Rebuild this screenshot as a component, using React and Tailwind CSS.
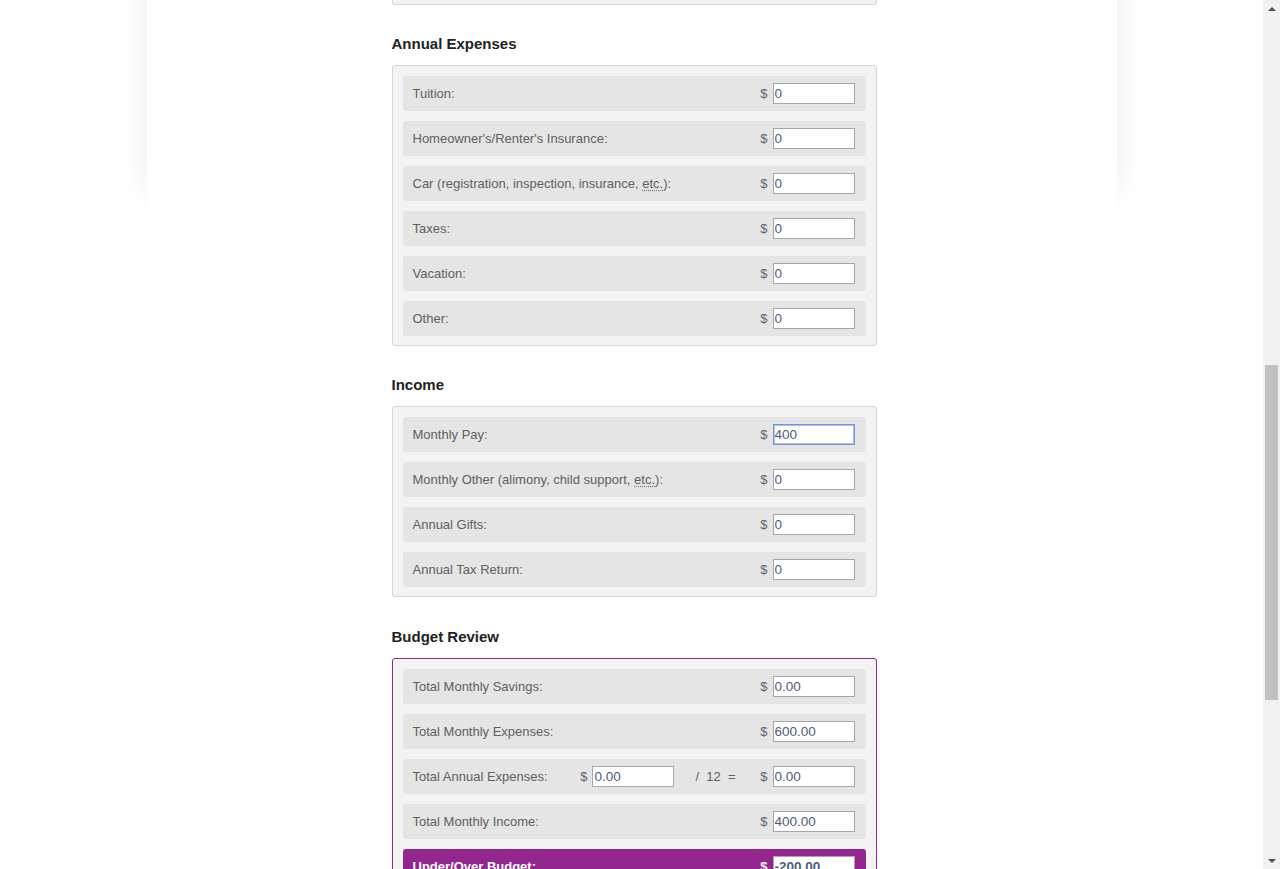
import React from 'react';

const annual = [
    { label: 'Tuition:', value: '0' },
    { label: "Homeowner's/Renter's Insurance:", value: '0' },
    { label: 'Car (registration, inspection, insurance, ', etc: true, value: '0' },
    { label: 'Taxes:', value: '0' },
    { label: 'Vacation:', value: '0' },
    { label: 'Other:', value: '0' },
];

const income = [
    { label: 'Monthly Pay:', value: '400', focused: true },
    { label: 'Monthly Other (alimony, child support, ', etc: true, value: '0' },
    { label: 'Annual Gifts:', value: '0' },
    { label: 'Annual Tax Return:', value: '0' },
];

const Money = ({ value, focused, light }) => (
    <div className="flex items-center gap-[5px]">
        <span className={light ? 'text-white font-bold' : 'text-[#5c6474]'}>$</span>
        <input
            readOnly
            value={value}
            className={`w-[82px] h-[21px] px-[1px] bg-white text-[13.5px] text-[#4d5d78] outline-none border ${focused ? 'border-[#6f95d6] shadow-[0_0_0_1px_#a9c2ea_inset]' : 'border-[#a6a6a6]'}`}
        />
    </div>
);

const Label = ({ row }) => (
    <span className="pt-[1px]">
        {row.label}
        {row.etc && (
            <>
                <abbr className="underline decoration-dotted decoration-[#777] underline-offset-2">etc.</abbr>):
            </>
        )}
    </span>
);

const Row = ({ row }) => (
    <div className="h-[35px] rounded-[3px] bg-[#e5e5e5] pl-[10px] pr-[11px] flex items-center justify-between">
        <Label row={row} />
        <Money value={row.value} focused={row.focused} />
    </div>
);

const Heading = ({ children, top = 'mt-[29px]' }) => (
    <h3 className={`${top} mb-[11px] text-[15px] leading-[20px] font-bold text-[#222]`}>{children}</h3>
);

const Box = ({ children, purple }) => (
    <div className={`rounded-[3px] bg-[#f3f3f3] pt-[10px] pb-[9px] px-[10px] flex flex-col gap-[10px] border ${purple ? 'border-[#93268f]' : 'border-[#d6d6d6]'}`}>
        {children}
    </div>
);

const Scrollbar = () => (
    <div className="w-[17px] shrink-0 bg-[#f1f1f1] flex flex-col items-center">
        <div className="h-[17px] flex items-center justify-center">
            <div className="w-0 h-0 border-x-[4px] border-x-transparent border-b-[4px] border-b-[#505050]" />
        </div>
        <div className="h-[348px]" />
        <div className="w-[13px] h-[335px] bg-[#c1c1c1]" />
        <div className="flex-1" />
        <div className="h-[17px] flex items-center justify-center">
            <div className="w-0 h-0 border-x-[4px] border-x-transparent border-t-[4px] border-t-[#505050]" />
        </div>
    </div>
);

const App = () => {
    return (
        <div className="h-[869px] w-[1280px] overflow-hidden flex bg-white font-['Liberation_Sans',Arial,sans-serif] text-[13px] text-[#5f5f5f]">
            <div className="flex-1 flex justify-center">
                <div className="relative w-[970px]">
                    {/* soft card shadow above the fold */}
                    <div className="absolute inset-x-0 top-[-150px] h-[340px] shadow-[0_0_30px_rgba(0,0,0,0.08)]" />
                    <div className="relative bg-white h-full">
                        <div className="ml-[245px] w-[485px]">
                            <div className="h-[5px] bg-[#f3f3f3] border-x border-b border-[#d6d6d6] rounded-b-[3px]" />

                            <Heading>Annual Expenses</Heading>
                            <Box>
                                {annual.map((r, i) => <Row key={i} row={r} />)}
                            </Box>

                            <Heading>Income</Heading>
                            <Box>
                                {income.map((r, i) => <Row key={i} row={r} />)}
                            </Box>

                            <Heading top="mt-[30px]">Budget Review</Heading>
                            <Box purple>
                                <Row row={{ label: 'Total Monthly Savings:', value: '0.00' }} />
                                <Row row={{ label: 'Total Monthly Expenses:', value: '600.00' }} />
                                <div className="h-[35px] rounded-[3px] bg-[#e5e5e5] pl-[10px] pr-[11px] flex items-center">
                                    <span className="w-[168px] pt-[1px]">Total Annual Expenses:</span>
                                    <Money value="0.00" />
                                    <span className="ml-[21px] w-[65px] pt-[1px]">/&nbsp; 12 &nbsp;=</span>
                                    <Money value="0.00" />
                                </div>
                                <Row row={{ label: 'Total Monthly Income:', value: '400.00' }} />
                                <div className="h-[35px] rounded-[3px] bg-[#93268f] pl-[10px] pr-[11px] flex items-center justify-between text-white font-bold">
                                    <span className="pt-[1px]">Under/Over Budget:</span>
                                    <Money value="-200.00" light />
                                </div>
                            </Box>
                        </div>
                    </div>
                </div>
            </div>
            <Scrollbar />
        </div>
    );
};

export default App;
